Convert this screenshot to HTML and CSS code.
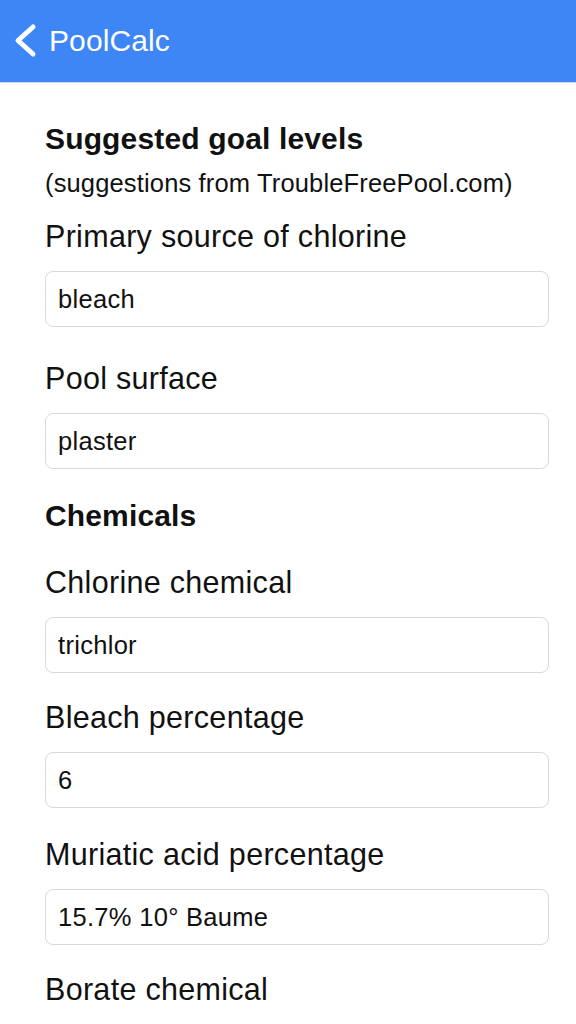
FILE: index.html
```html
<!DOCTYPE html>
<html lang="en">
<head>
<meta charset="utf-8">
<title>PoolCalc</title>
<link rel="stylesheet" href="styles.css">
</head>
<body>
<header class="navbar">
  <svg class="back" width="24" height="36" viewBox="0 0 24 36" aria-hidden="true">
    <path d="M19 4 L4 17.5 L19 31" fill="none" stroke="#fff" stroke-width="5" stroke-linecap="round" stroke-linejoin="round"/>
  </svg>
  <span class="title">PoolCalc</span>
</header>
<main class="content">
  <h2 class="section-title first">Suggested goal levels</h2>
  <p class="caption">(suggestions from TroubleFreePool.com)</p>

  <div class="field field-first">
    <div class="label">Primary source of chlorine</div>
    <div class="box">bleach</div>
  </div>
  <div class="field field-loose">
    <div class="label">Pool surface</div>
    <div class="box">plaster</div>
  </div>

  <h2 class="section-title">Chemicals</h2>

  <div class="field field-after-title">
    <div class="label">Chlorine chemical</div>
    <div class="box">trichlor</div>
  </div>
  <div class="field">
    <div class="label">Bleach percentage</div>
    <div class="box">6</div>
  </div>
  <div class="field field-mid">
    <div class="label">Muriatic acid percentage</div>
    <div class="box">15.7% 10° Baume</div>
  </div>
  <div class="field field-last">
    <div class="label">Borate chemical</div>
  </div>
</main>
</body>
</html>
```
FILE: styles.css
```css
html, body {
  margin: 0;
  padding: 0;
  background: #ffffff;
}
body {
  font-family: "Liberation Sans", Arial, sans-serif;
  color: #111111;
  overflow: hidden;
}
.navbar {
  height: 82px;
  background: #3e86f5;
  border-bottom: 1px solid #c9d7ee;
  display: flex;
  align-items: center;
  padding-left: 14px;
  gap: 11px;
  box-sizing: content-box;
}
.back {
  display: block;
}
.title {
  color: #ffffff;
  font-size: 30px;
  line-height: 36px;
  letter-spacing: 0.1px;
}
.content {
  padding: 0 27px 0 45px;
}
.section-title {
  font-size: 30px;
  font-weight: bold;
  line-height: 36px;
  margin: 29px 0 0 0;
  letter-spacing: 0.15px;
}
.section-title.first {
  margin-top: 38px;
}
.caption {
  font-size: 25.5px;
  line-height: 30px;
  margin: 11px 0 0 0;
  letter-spacing: 0.15px;
}
.field {
  margin-top: 26px;
}
.field-first {
  margin-top: 20px;
}
.field-loose {
  margin-top: 33px;
}
.field-after-title {
  margin-top: 30px;
}
.field-mid {
  margin-top: 28px;
}
.field-last {
  margin-top: 26px;
}
.label {
  font-size: 30.5px;
  line-height: 36px;
  letter-spacing: 0.3px;
}
.box {
  margin-top: 17px;
  height: 54px;
  border: 1px solid #d9d9d9;
  border-radius: 8px;
  padding: 0 12px;
  font-size: 25.5px;
  line-height: 54px;
  letter-spacing: 0.3px;
  color: #111111;
  background: #ffffff;
}
```
